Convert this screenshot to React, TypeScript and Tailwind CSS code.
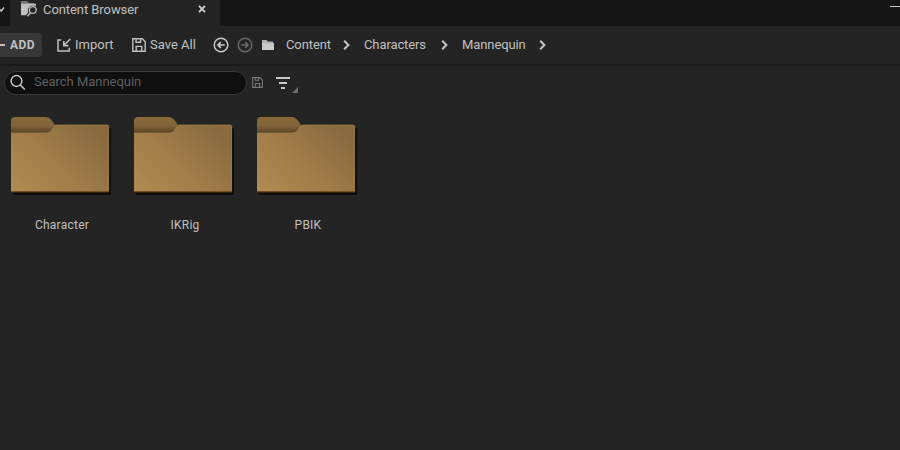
import React from "react";

const FOLDERS = ["Character", "IKRig", "PBIK"];

const CRUMBS = [
  { name: "Content", box: "w-[78px]" },
  { name: "Characters", box: "w-[98px]" },
  { name: "Mannequin", box: "w-[84px]" },
];

function TabIcon() {
  return (
    <svg width="18" height="18" viewBox="0 0 18 18" className="shrink-0" fill="none">
      <path d="M1 1h6l2 2h5v1H1z" fill="#777" />
      <path d="M1 3.7h15v2H11L8 8.5v4L6 15.3H1z" fill="#c0c0c0" />
      <circle cx="12.8" cy="10" r="3.4" stroke="#b4b4b4" strokeWidth="1.4" fill="#242424" />
      <path d="M10.4 12.6 7.6 16.2" stroke="#b4b4b4" strokeWidth="1.6" />
    </svg>
  );
}

function CloseIcon() {
  return (
    <svg width="8" height="8" viewBox="0 0 8 8" className="shrink-0">
      <path d="M1 .8 7 7.2M7 .8 1 7.2" stroke="#d0d0d0" strokeWidth="1.8" />
    </svg>
  );
}

function ImportIcon() {
  return (
    <svg width="14" height="14" viewBox="0 0 14 14" className="shrink-0" fill="none" stroke="#c0c0c0">
      <path d="M4.2 2H1v11h11.2V9.8" strokeWidth="1.5" />
      <path d="M13.3 1 7.2 7M6.8 3v4.6h4.6" strokeWidth="1.6" />
    </svg>
  );
}

function SaveIcon({ size, color, width }: { size: number; color: string; width: number }) {
  return (
    <svg width={size} height={size} viewBox="0 0 14 14" className="shrink-0" fill="none" stroke={color} strokeWidth={width}>
      <path d="M.8.8h9.5l2.9 2.9v9.5H.8z" />
      <path d="M4 1.2v3h4.6V1.2M4.2 13V8.4h5.6V13" />
    </svg>
  );
}

function ArrowCircle({ color, flip }: { color: string; flip?: boolean }) {
  return (
    <svg width="16" height="16" viewBox="0 0 16 16" className={flip ? "shrink-0 -scale-x-100" : "shrink-0"} fill="none" stroke={color}>
      <circle cx="8" cy="8" r="6.8" strokeWidth="1.5" />
      <path d="M11.8 8H5M7.8 5.2 5 8l2.8 2.8" strokeWidth="1.7" />
    </svg>
  );
}

function Chevron() {
  return (
    <svg width="7" height="10" viewBox="0 0 7 10" className="shrink-0">
      <path d="M1.2.8 5.4 5 1.2 9.2" fill="none" stroke="#c6c6c6" strokeWidth="2" />
    </svg>
  );
}

function FolderArt({ id }: { id: string }) {
  return (
    <svg width="104" height="82" viewBox="0 0 104 82">
      <defs>
        <linearGradient id={`body-${id}`} gradientUnits="userSpaceOnUse" x1="10" y1="84" x2="84" y2="10">
          <stop offset="0" stopColor="#b18b53" />
          <stop offset="0.5" stopColor="#a07c49" />
          <stop offset="1" stopColor="#886a3e" />
        </linearGradient>
        <linearGradient id={`tab-${id}`} gradientUnits="userSpaceOnUse" x1="0" y1="1" x2="0" y2="17">
          <stop offset="0" stopColor="#896a3b" />
          <stop offset="0.55" stopColor="#80633a" />
          <stop offset="1" stopColor="#574326" />
        </linearGradient>
        <filter id={`blur-${id}`} x="-5%" y="-5%" width="110%" height="110%">
          <feGaussianBlur stdDeviation="0.7" />
        </filter>
      </defs>
      <path d="M3 12h96q2 0 2 2v65H3z" fill="#0b0b0b" filter={`url(#blur-${id})`} />
      <path d="M1 5q0-4 4-4h31q3 0 5 2.5L45 9v11H1z" fill={`url(#tab-${id})`} />
      <path d="M1 17h36q3 0 5-3l2.5-4q.7-1 2-1H97q2 0 2 2v65.5H1z" fill={`url(#body-${id})`} />
      <path d="M1 17h36q3 0 5-3l2.5-4q.7-1 2-1H97q1.7 0 2 2" fill="none" stroke="#a9824a" strokeWidth=".7" />
      <path d="M1 75.5h98" stroke="#6f5025" strokeWidth="1" />
      <path d="M1 76.5h98" stroke="#33230c" strokeWidth="1" />
      <path d="M98.6 11v64" stroke="#a07a43" strokeWidth=".7" />
    </svg>
  );
}

export default function App() {
  return (
    <div className="flex h-[450px] w-[900px] flex-col overflow-hidden bg-[#242424] font-[Roboto,sans-serif] text-[13px] leading-4 text-[#c0c0c0]">
      <header className="flex h-[26px] shrink-0 bg-[#151515]">
        <div className="w-[10px] pt-[5px]">
          <svg width="6" height="9" viewBox="0 0 6 9">
            <path d="M0 4.5 1.2 6 4 2.5" stroke="#c0c0c0" strokeWidth="1.5" fill="none" />
          </svg>
        </div>
        <div className="flex w-[210px] bg-[#242424] pl-[10px]">
          <TabIcon />
          <span className="ml-[5px] mt-[2px] w-[155px] whitespace-nowrap tracking-[-0.07px]">Content Browser</span>
          <span className="pt-[5px]">
            <CloseIcon />
          </span>
        </div>
        <div className="ml-auto mt-[6px] h-px w-[10px] bg-[#c8c8c8]" />
      </header>

      <nav className="flex h-10 shrink-0 items-center border-b-2 border-[#1a1a1a] whitespace-nowrap">
        <button className="flex h-6 w-[42px] items-center rounded-r bg-[#383838] text-[12px] font-bold">
          <span className="h-[2px] w-[5px] bg-[#c0c0c0]" />
          <span className="ml-[5px] tracking-[0.5px]">ADD</span>
        </button>
        <button className="ml-[15px] flex w-[75px] items-center">
          <ImportIcon />
          <span className="ml-1">Import</span>
        </button>
        <button className="flex w-[81px] items-center">
          <SaveIcon size={14} color="#c0c0c0" width={1.4} />
          <span className="ml-1">Save All</span>
        </button>
        <ArrowCircle color="#c8c8c8" />
        <span className="ml-2 flex">
          <ArrowCircle color="#686868" flip />
        </span>
        <svg width="12" height="10" viewBox="0 0 12 10" className="ml-[9px] mr-3 shrink-0">
          <path d="M0 0h4.5L6 1.5h5V3H0z" fill="#b0b0b0" />
          <path d="M0 3h12v7H0z" fill="#c8c8c8" />
        </svg>
        {CRUMBS.map((c) => (
          <span key={c.name} className={`flex shrink-0 items-center justify-between ${c.box} [&:not(:last-child)]:pr-[14px]`}>
            <span className="tracking-[-0.1px]">{c.name}</span>
            <Chevron />
          </span>
        ))}
      </nav>

      <div className="flex h-[33px] shrink-0 items-center pl-1">
        <label className="flex h-6 w-[243px] items-center rounded-full border border-[#383838] bg-[#0f0f0f] pl-[5px]">
          <svg width="17" height="17" viewBox="0 0 17 17" className="shrink-0" fill="none" stroke="#c8c8c8">
            <circle cx="6.5" cy="7" r="5.4" strokeWidth="1.5" />
            <path d="m10.3 11 4.5 4.5" strokeWidth="1.7" />
          </svg>
          <span className="mb-[2px] ml-[7px] tracking-[-0.03px] text-[#606060]">Search Mannequin</span>
        </label>
        <span className="ml-[5px]">
          <SaveIcon size={11} color="#787878" width={1.3} />
        </span>
        <svg width="23" height="18" viewBox="0 0 23 18" className="ml-[13px] mt-[4px]">
          <path d="M0 2h14M3 7h8M5 12h4" stroke="#c8c8c8" strokeWidth="2" />
          <path d="M22 11v6h-6z" fill="#707070" />
        </svg>
      </div>

      <main className="flex gap-[19px] pl-[10px] pt-[17px]">
        {FOLDERS.map((name) => (
          <figure key={name} className="flex w-[104px] flex-col items-center">
            <FolderArt id={name} />
            <figcaption className="mt-[19px] text-[12px] tracking-[0.24px]">{name}</figcaption>
          </figure>
        ))}
      </main>
    </div>
  );
}
